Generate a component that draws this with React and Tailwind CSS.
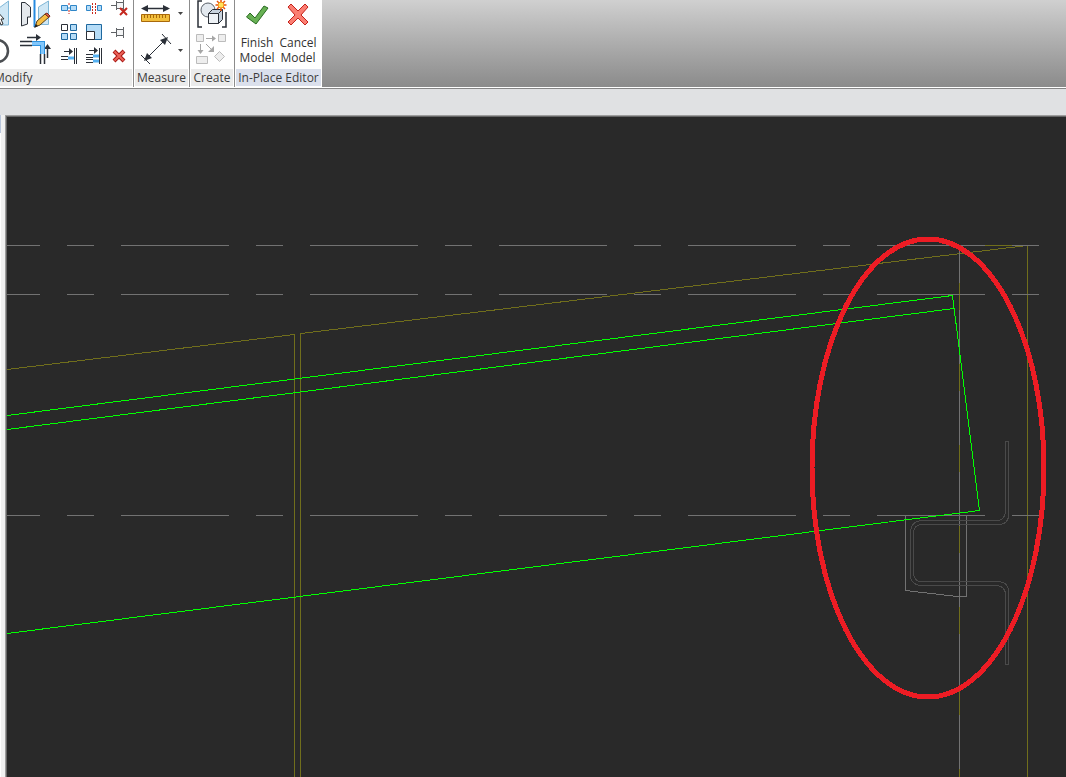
const INK = "#2b3038";
const BLUE = "#2f86c8";
const SKY = "#b5dcf7";

// Small ribbon icons, all drawn on a 24x24 grid
const smallTools = [
  {
    name: "Split element",
    art: (
      <>
        <path d="M4.5 9.5h6v5h-6zM13.5 9.5h6v5h-6z" fill={SKY} stroke={BLUE} />
        <path d="M10 12h4" stroke={BLUE} />
        <path d="M12 7v3M12 14v4" stroke="#c8281e" strokeDasharray="2 1" />
      </>
    ),
  },
  {
    name: "Split with gap",
    art: (
      <>
        <path d="M4.5 9.5h4v5h-4zM15.5 9.5h4v5h-4z" fill={SKY} stroke={BLUE} />
        <path d="M10.5 7v11M13.5 7v11" stroke="#c8281e" strokeDasharray="2 1" />
      </>
    ),
  },
  {
    name: "Unpin",
    art: (
      <>
        <path d="M4 9.5h5M9.5 5v9M16.5 3v11" stroke="#5f6266" />
        <path d="M9.5 6.5h7v6h-7z" fill="#f4f5f6" stroke="#5f6266" />
        <path d="M13 12l7 7M20 12l-7 7" stroke="#c5281f" strokeWidth="2" />
      </>
    ),
  },
  {
    name: "Array",
    art: (
      <>
        <path d="M4.5 4.5h6v6h-6z" fill="#fff" stroke={INK} />
        <path d="M13.5 4.5h6v6h-6zM4.5 13.5h6v6h-6zM13.5 13.5h6v6h-6z" fill={SKY} stroke="#1e689f" />
      </>
    ),
  },
  {
    name: "Scale",
    art: (
      <>
        <path d="M4.5 4.5h15v15h-15z" fill={SKY} stroke="#1e689f" />
        <path d="M4.5 11.5h8v8h-8z" fill="#fff" stroke={INK} />
      </>
    ),
  },
  {
    name: "Pin",
    art: (
      <>
        <path d="M4 12.5h5M9.5 8v9M16.5 7v11" stroke="#5f6266" />
        <path d="M9.5 9.5h7v6h-7z" fill="#f4f5f6" stroke="#5f6266" />
      </>
    ),
  },
  {
    name: "Trim single",
    art: (
      <>
        <path d="M7 7.5h6M4 12.5h7M4 15.5h7M17.5 4v16M19.5 4v16" stroke={INK} />
        <path d="M12 4l4 3.5-4 3.500z" fill={INK} />
        <path d="M11 14h6" stroke="#55b1f2" strokeWidth="3" />
      </>
    ),
  },
  {
    name: "Trim multiple",
    art: (
      <>
        <path d="M7 6.5h6M4 10.5h7M4 13.5h7M4 15.5h7M4 18.5h7M17.5 4v16M19.5 4v16" stroke={INK} />
        <path d="M12 3l4 3.5-4 3.500z" fill={INK} />
        <path d="M11 12h6M11 17h6" stroke="#55b1f2" strokeWidth="3" />
      </>
    ),
  },
  {
    name: "Delete",
    art: (
      <>
        <path d="M7 7l10 10M17 7L7 17" stroke="#a81712" strokeWidth="4" />
        <path d="M7.500 7.500l9 9M16.500 7.500l-9 9" stroke="#ec6258" strokeWidth="2" />
      </>
    ),
  },
];

function ToolButton({ label, children }) {
  return (
    <button type="button" aria-label={label} className="block cursor-default">
      {children}
    </button>
  );
}

function Panel({ title, active, clipped, children }) {
  return (
    <section
      className={`flex shrink-0 flex-col bg-white ${
        active ? "" : "border-r border-[#8c8c8c]"
      }`}
    >
      <div className={`flex h-[69px] pl-1 ${clipped ? "pr-0.5" : "pr-1"}`}>{children}</div>
      <h2
        className={`h-[17px] text-[12px] leading-[18px] text-[#3c3c3c] ${
          active ? "bg-[#dbe0ec]" : "bg-[#ebebeb]"
        } ${clipped ? "-ml-1.5 mr-px text-left" : "mx-px text-center"}`}
      >
        {title}
      </h2>
    </section>
  );
}

function ModifyPanel() {
  return (
    <Panel title="Modify" clipped>
      <div className="-ml-1 flex w-5 flex-col justify-between pb-1">
        <ToolButton label="Align">
          <svg width="20" height="28">
            <path d="M-1 8L8.5 1v24H-1z" fill="#cfe7f5" stroke="#7fb6d6" />
            <path d="M-4 10l8 9h-3l2 5-2 1-2-5-3 2z" fill="#fff" stroke="#333" />
          </svg>
        </ToolButton>
        <ToolButton label="Rotate">
          <svg width="20" height="28">
            <circle cx="-3" cy="14" r="11" fill="none" stroke="#4b4e52" strokeWidth="2.500" />
          </svg>
        </ToolButton>
      </div>
      <div className="flex w-[37px] flex-col justify-between pb-[3px]">
        <ToolButton label="Mirror">
          <svg width="32" height="30">
            <path d="M1.5 2.5H5L10.5 7v10h-3v7l-6 2z" fill="#e4e8ec" stroke={INK} />
            <path d="M18.5 7L28.500 1v23.500h-10z" fill="#cfe7f5" stroke="#7fb6d6" />
            <path d="M14.5 0v27" stroke="#268be0" strokeWidth="2" />
            <path d="M15 27l2-6 8-7 4 3-9 8z" fill="#f6bd43" stroke="#5a3f16" />
            <path d="M25 14l2-1 3 3-1 1.500z" fill="#e0604a" stroke="#7a2a1c" />
            <path d="M14 28l2-4 2 2z" fill="#222" />
          </svg>
        </ToolButton>
        <ToolButton label="Trim to corner">
          <svg width="32" height="32">
            <path d="M7 3.5h10M0 7.5h12M0 11.5h12M20.5 20v10M24.5 20v10M27.5 24V14" fill="none" stroke={INK} strokeWidth="1.500" />
            <path d="M16 0l5 3.5-5 3.500zM24 15l3.500-5 3.500 5z" fill={INK} />
            <path d="M12 9.5h10.500V20" fill="none" stroke="#2f93df" strokeWidth="5" />
            <path d="M12 9.5h10.500V20" fill="none" stroke="#82c6fa" strokeWidth="3" />
          </svg>
        </ToolButton>
      </div>
      <div className="-mt-1 grid grid-cols-3 gap-x-px self-start">
        {smallTools.map((tool) => (
          <ToolButton key={tool.name} label={tool.name}>
            <svg width="24" height="24">{tool.art}</svg>
          </ToolButton>
        ))}
      </div>
    </Panel>
  );
}

function DropArrow() {
  return (
    <svg width="6" height="4">
      <path d="M0 0h5L2.5 3z" fill="#444" />
    </svg>
  );
}

function MeasurePanel() {
  return (
    <Panel title="Measure">
      <div className="mr-px flex w-[46px] flex-col justify-between pb-1">
        <div className="flex items-center justify-between">
          <ToolButton label="Measure between references">
            <svg width="34" height="28">
              <path d="M6 8.5h24" stroke={INK} strokeWidth="1.500" />
              <path d="M3 8.5L10 5v7zM32 8.5L25 5v7z" fill={INK} />
              <path d="M3.5 14.5h28v7h-28z" fill="#f2bf3d" stroke="#a9690b" />
              <path d="M6.5 15v3M9.5 15v3M12.5 15v3M15.5 15v3M18.5 15v3M21.5 15v3M24.5 15v3M27.5 15v3" stroke="#a9690b" />
            </svg>
          </ToolButton>
          <ToolButton label="Measure options">
            <DropArrow />
          </ToolButton>
        </div>
        <div className="flex items-center justify-between">
          <ToolButton label="Aligned dimension">
            <svg width="34" height="32">
              <path d="M8 26L28 6M24 1l9 10M3 22l9 9" stroke={INK} fill="none" />
              <path d="M6 28l3-8 5 5zM30 4l-8 3 5 5z" fill={INK} />
            </svg>
          </ToolButton>
          <div className="pt-1">
            <ToolButton label="Dimension options">
              <DropArrow />
            </ToolButton>
          </div>
        </div>
      </div>
    </Panel>
  );
}

function CreatePanel() {
  return (
    <Panel title="Create">
      <div className="flex w-9 flex-col justify-between pb-1 pl-0.5">
        <ToolButton label="Create group">
          <svg width="34" height="30">
            <path d="M6 1H2v26h4M26 27h4V12" fill="none" stroke={INK} strokeWidth="1.500" />
            <circle cx="12" cy="10" r="7" fill="#e3e9ef" stroke="#596069" />
            <path d="M12.5 13.500l4-4h10v10l-4 4h-10z" fill="#c8d3de" stroke={INK} />
            <path d="M12.5 13.500h10v10h-10zM22.500 13.500l4-4" fill="#eef2f6" stroke={INK} />
            <path d="M25 0v11M19.500 5h11M21 1l8 8M29 1l-8 8" stroke="#e8520e" strokeWidth="1.500" />
            <circle cx="25" cy="5" r="3" fill="#ffe25a" stroke="#f28a19" />
          </svg>
        </ToolButton>
        <ToolButton label="Create similar">
          <svg width="34" height="32">
            <g fill="#eee" stroke="#bcbcbc">
              <path d="M.5 1.500h7v7h-7zM22.500 1.500h7v7h-7zM.5 23.500h11v7h-11z" />
              <path d="M23.500 18.500l5 5-5 5-5-5z" />
            </g>
            <path d="M10 5.500h8M4.500 11v6M10 11l6 6" stroke="#a6a6a6" />
            <path d="M16 2.500l4 3-4 3zM1.500 17l3 4 3-4zM18 19v-6l-6 6z" fill="#a6a6a6" />
          </svg>
        </ToolButton>
      </div>
    </Panel>
  );
}

function EditorPanel() {
  return (
    <Panel title="In-Place Editor" active>
      <div className="mr-0.5 flex w-[77px] justify-between text-[12px] leading-[15px] text-[#333]">
        <button type="button" className="flex w-9 flex-col items-center gap-1">
          <svg width="24" height="31">
            <path d="M1.500 17l3.500-4 5 5L19 6l4 2-12 16z" fill="#68b154" stroke="#286b20" />
          </svg>
          <span>Finish<br />Model</span>
        </button>
        <button type="button" className="flex w-9 flex-col items-center gap-1">
          <svg width="24" height="31">
            <path d="M2 7l3-3 7 7 7-7 3 3-7 8 7 7-3 3-7-7-7 7-3-3 7-7z" fill="#fb7e72" stroke="#c4211a" />
          </svg>
          <span>Cancel<br />Model</span>
        </button>
      </div>
    </Panel>
  );
}

function Drawing() {
  return (
    <svg className="block h-full w-full" role="img" aria-label="Roof edge section">
      <g fill="none" shapeRendering="crispEdges">
        {/* roof outline and posts */}
        <g stroke="#706e1c">
          <path d="M0 252.500L287.500 217.500V660" />
          <path d="M293.500 660V216.500L1020 128.500" />
          <path d="M952.500 128V660" />
          <path d="M1020.500 128V660" />
          <path d="M978 128.500H1006" />
        </g>

        {/* reference levels */}
        <g stroke="#727272" strokeDasharray="108 27 27 27">
          <path d="M-75 128.500H1033" />
          <path d="M-75 177.500H1033" />
          <path d="M-75 398.500H1033" />
        </g>
        <path d="M952.500 128V660" stroke="#727272" strokeDasharray="54 27" strokeDashoffset="16" />

        {/* bracket and channel */}
        <path d="M898.500 399V473.500L950 479.500H959.500V399" stroke="#727272" />
        <path
          d="M998.500 324.500H1001.500V398Q1001.500 407.500 991 407.500H915Q906.500 407.500 906.500 417V455Q906.500 464.500 914 464.500H990Q1001.500 464.500 1001.500 475V547.500H998.500V478Q998.500 468.500 988 468.500H916Q903.500 468.500 903.500 458V416Q903.500 403.500 916 403.500H990Q998.500 403.500 998.500 393Z"
          stroke="#4a4a4a"
        />

        {/* slab sketch lines */}
        <g stroke="#00ff00">
          <path d="M0 298.500L945.500 178.500L972.500 393.500L0 516.500" />
          <path d="M0 312.500L947 191.500" />
        </g>
        <ellipse cx="921" cy="351" rx="116" ry="229" stroke="#ed1c24" strokeWidth="5" />
      </g>
    </svg>
  );
}

export default function App() {
  return (
    <div className="flex h-screen flex-col overflow-hidden bg-[#e0e1e3] font-['Open_Sans','Noto_Sans',sans-serif]">
      <header className="flex h-[88px] shrink-0 overflow-hidden border-b border-white bg-linear-to-b from-[#d0d0d0] to-[#8b8b8b]">
        <ModifyPanel />
        <MeasurePanel />
        <CreatePanel />
        <EditorPanel />
      </header>
      <div className="h-[27px] shrink-0 border-t border-[#858585]" />
      <main className="flex min-h-0 flex-1 bg-[#f0f0f0]">
        {/* edge of the docked palette */}
        <div className="mr-1 w-px bg-white">
          <div className="h-[18px] bg-[#b9c6dc]" />
        </div>
        <div className="min-w-0 flex-1 border-t border-l border-[#9c9c9c]">
          <div className="h-full border-t border-l border-[#666666] bg-[#292929]">
            <Drawing />
          </div>
        </div>
      </main>
    </div>
  );
}
